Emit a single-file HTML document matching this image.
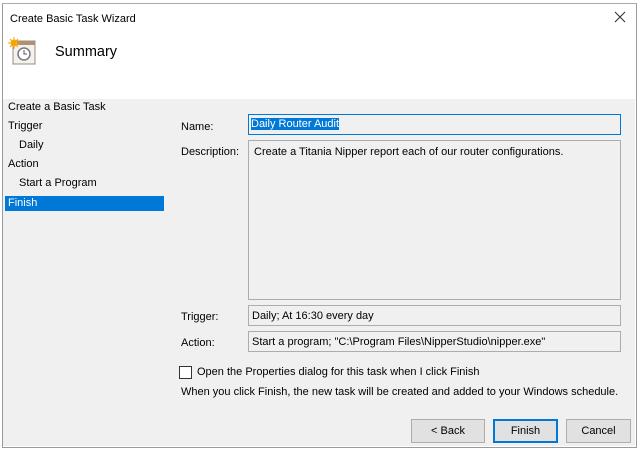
<!DOCTYPE html><html><head><style>
body{margin:0;width:644px;height:454px;background:#fff;font-family:"Liberation Sans",sans-serif;font-size:11px;color:#000;position:relative;overflow:hidden}
.a{position:absolute;white-space:nowrap}
.box{position:absolute;border:1px solid #adadad;box-sizing:border-box;background:#f0f0f0;padding:4px 5px}
.btn{position:absolute;top:419px;height:24px;border:1px solid #adadad;background:#e1e1e1;box-sizing:border-box;text-align:center;line-height:22px}
</style></head><body>
<div class="a" style="left:2px;top:3px;width:633px;height:443px;border:1px solid #9a9a9a;border-top-color:#aaa;background:#fff"></div>
<div class="a" style="left:3px;top:99px;width:632px;height:347px;background:#f0f0f0"></div>
<div class="a" style="left:10px;top:13px">Create Basic Task Wizard</div>
<svg class="a" style="left:614px;top:11px" width="12" height="12"><path d="M1 1L11 11M11 1L1 11" stroke="#333" stroke-width="1.1"/></svg>
<svg class="a" style="left:8px;top:37px" width="30" height="30"><rect x="5" y="4" width="22" height="23" fill="#f4f2ee" stroke="#9a8f80"/><rect x="5" y="4" width="22" height="4" fill="#b09070"/><circle cx="16" cy="17" r="6" fill="#fff" stroke="#7a7a7a" stroke-width="1.5"/><path d="M16 13v4h3" stroke="#555" fill="none"/><circle cx="6" cy="6" r="3.5" fill="#f7b500"/><path d="M6 0v12M0 6h12M2 2l8 8M10 2l-8 8" stroke="#f7a000" stroke-width="1"/></svg>
<div class="a" style="left:55px;top:44px;font-size:14.5px">Summary</div>
<div class="a" style="left:8px;top:101px">Create a Basic Task</div>
<div class="a" style="left:8px;top:120px">Trigger</div>
<div class="a" style="left:19px;top:139px">Daily</div>
<div class="a" style="left:8px;top:158px">Action</div>
<div class="a" style="left:19px;top:177px">Start a Program</div>
<div class="a" style="left:5px;top:196px;width:159px;height:15px;background:#0078d7"></div>
<div class="a" style="left:8px;top:197px;color:#fff">Finish</div>
<div class="a" style="left:181px;top:121px">Name:</div>
<div class="a" style="left:181px;top:146px">Description:</div>
<div class="a" style="left:181px;top:311px">Trigger:</div>
<div class="a" style="left:181px;top:337px">Action:</div>
<div class="box" style="left:248px;top:114px;width:373px;height:21px;border-color:#0078d7;padding:3px 2px"><span style="background:#0078d7;color:#fff">Daily Router Audit</span></div>
<div class="box" style="left:248px;top:140px;width:373px;height:160px;padding:5px 5px">Create a Titania Nipper report each of our router configurations.</div>
<div class="box" style="left:248px;top:305px;width:373px;height:21px;padding:4px 3px">Daily; At 16:30 every day</div>
<div class="box" style="left:248px;top:331px;width:373px;height:21px;padding:4px 3px">Start a program; "C:\Program Files\NipperStudio\nipper.exe"</div>
<div class="a" style="left:179px;top:366px;width:11px;height:11px;border:1px solid #333;background:#fff"></div>
<div class="a" style="left:197px;top:366px">Open the Properties dialog for this task when I click Finish</div>
<div class="a" style="left:181px;top:386px">When you click Finish, the new task will be created and added to your Windows schedule.</div>
<div class="btn" style="left:411px;width:74px">&lt; Back</div>
<div class="btn" style="left:493px;width:65px;border:2px solid #0078d7;line-height:20px">Finish</div>
<div class="btn" style="left:566px;width:65px">Cancel</div>
</body></html>
